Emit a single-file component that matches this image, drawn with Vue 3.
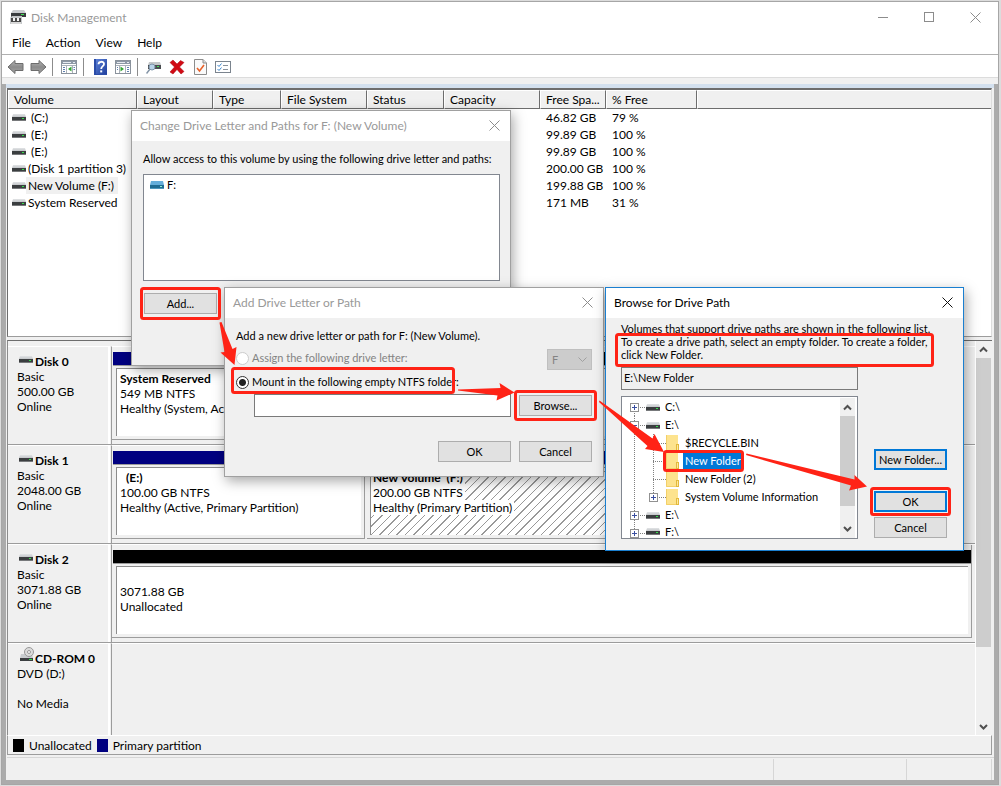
<script setup>
const menus = ['File', 'Action', 'View', 'Help']

const columns = [
  { label: 'Volume', cls: 'c-volume' },
  { label: 'Layout', cls: 'c-layout' },
  { label: 'Type', cls: 'c-type' },
  { label: 'File System', cls: 'c-fs' },
  { label: 'Status', cls: 'c-status' },
  { label: 'Capacity', cls: 'c-capacity' },
  { label: 'Free Spa...', cls: 'c-free' },
  { label: '% Free', cls: 'c-pct' },
  { label: '', cls: 'c-rest' }
]

const volumes = [
  { name: '(C:)', free: '46.82 GB', pct: '79 %', letter: true },
  { name: '(E:)', free: '99.89 GB', pct: '100 %', letter: true },
  { name: '(E:)', free: '99.89 GB', pct: '100 %', letter: true },
  { name: '(Disk 1 partition 3)', free: '200.00 GB', pct: '100 %' },
  { name: 'New Volume (F:)', free: '199.88 GB', pct: '100 %', selected: true },
  { name: 'System Reserved', free: '171 MB', pct: '31 %' }
]

const disks = [
  {
    name: 'Disk 0',
    lines: ['Basic', '500.00 GB', 'Online'],
    parts: [
      { size: 'w-reserved', kind: 'primary', title: 'System Reserved', lines: ['549 MB NTFS', 'Healthy (System, Ac'] },
      { size: 'w-fill', kind: 'free', title: '', lines: [] }
    ]
  },
  {
    name: 'Disk 1',
    lines: ['Basic', '2048.00 GB', 'Online'],
    parts: [
      { size: 'w-e', kind: 'primary', title: '(E:)', indent: true, lines: ['100.00 GB NTFS', 'Healthy (Active, Primary Partition)'] },
      { size: 'w-fill', kind: 'primary', hatched: true, title: 'New Volume  (F:)', lines: ['200.00 GB NTFS', 'Healthy (Primary Partition)'] }
    ]
  },
  {
    name: 'Disk 2',
    lines: ['Basic', '3071.88 GB', 'Online'],
    parts: [{ size: 'w-all', kind: 'free', title: '', lines: ['3071.88 GB', 'Unallocated'] }]
  }
]

const tree = [
  { label: 'C:\\', level: 1, box: '+', first: true },
  { label: 'E:\\', level: 1, box: '-' },
  { label: '$RECYCLE.BIN', level: 2 },
  { label: 'New Folder', level: 2, selected: true },
  { label: 'New Folder (2)', level: 2 },
  { label: 'System Volume Information', level: 2, box: '+', last: true },
  { label: 'E:\\', level: 1, box: '+' },
  { label: 'F:\\', level: 1, box: '+' }
]
</script>

<template>
  <div class="desktop">
    <svg class="defs" width="0" height="0" aria-hidden="true">
      <defs>
        <linearGradient id="driveTop" x1="0" y1="0" x2="0" y2="1">
          <stop offset="0" stop-color="#e2e4e6" />
          <stop offset="1" stop-color="#c2c5c8" />
        </linearGradient>
        <linearGradient id="arrowFill" x1="0" y1="0" x2="0" y2="1">
          <stop offset="0" stop-color="#b5b5b5" />
          <stop offset="0.5" stop-color="#8b8b8b" />
          <stop offset="1" stop-color="#a6a6a6" />
        </linearGradient>
        <linearGradient id="helpFill" x1="0" y1="0" x2="1" y2="1">
          <stop offset="0" stop-color="#5a7fd6" />
          <stop offset="1" stop-color="#1f3f9c" />
        </linearGradient>
        <symbol id="drive" viewBox="0 0 14 7">
          <path d="M1 0H13L14 3H0Z" fill="url(#driveTop)" />
          <rect y="3" width="14" height="4" fill="#3b3e40" />
          <rect y="6" width="14" height="1" fill="#77797b" />
          <rect x="10" y="4" width="2" height="1" fill="#35e04b" />
        </symbol>
        <symbol id="driveBlue" viewBox="0 0 14 8">
          <path d="M1 0H13L14 4H0Z" fill="#64aedb" />
          <rect y="4" width="14" height="4" fill="#1f6c93" />
          <rect y="7" width="14" height="1" fill="#4d97bd" />
          <rect x="10" y="5" width="2" height="1" fill="#8df0d0" />
        </symbol>
      </defs>
    </svg>

    <main class="window">
      <header class="titlebar">
        <svg class="app-icon" width="16" height="16" viewBox="0 0 16 16">
          <path d="M3 1H14L16 4H1Z" fill="#c9cccf" />
          <rect x="1" y="4" width="15" height="4" fill="#3a3d3f" />
          <rect x="11" y="5" width="3" height="1" fill="#3ce052" />
          <path d="M0 9L2 7H12V15H0Z" fill="#c4c7c9" />
          <rect x="1" y="9" width="10" height="4" fill="#4a4a4a" />
          <rect x="3" y="9" width="2" height="3" fill="#f4f4f4" />
          <rect x="7" y="9" width="2" height="3" fill="#f4f4f4" />
          <rect x="1" y="13" width="10" height="2" fill="#d8d8d8" />
        </svg>
        <h1 class="app-title">Disk Management</h1>
        <div class="window-controls">
          <button type="button" aria-label="Minimize">
            <svg width="11" height="11"><path d="M0 5.5H10" stroke="#8c8c8c" /></svg>
          </button>
          <button type="button" aria-label="Maximize">
            <svg width="11" height="11"><rect x="0.5" y="0.5" width="9" height="9" fill="none" stroke="#8c8c8c" /></svg>
          </button>
          <button type="button" aria-label="Close">
            <svg width="11" height="11"><path d="M0.5 0.5L10.5 10.5M10.5 0.5L0.5 10.5" stroke="#8c8c8c" /></svg>
          </button>
        </div>
      </header>

      <nav class="menubar">
        <button v-for="m in menus" :key="m" type="button">{{ m }}</button>
      </nav>

      <div class="toolbar">
        <button type="button" aria-label="Back" class="arrow-btn">
          <svg width="17" height="16" viewBox="0 0 17 16"><path d="M1 8L8 1.5V4.5H16V11.5H8V14.5Z" fill="url(#arrowFill)" stroke="#6d6d6d" /></svg>
        </button>
        <button type="button" aria-label="Forward" class="arrow-btn">
          <svg width="17" height="16" viewBox="0 0 17 16"><path d="M16 8L9 1.5V4.5H1V11.5H9V14.5Z" fill="url(#arrowFill)" stroke="#6d6d6d" /></svg>
        </button>
        <i class="sep"></i>
        <button type="button" aria-label="Console tree">
          <svg width="17" height="16" viewBox="0 0 17 16">
            <rect x="0.5" y="1.5" width="15" height="13" fill="#fff" stroke="#8a929c" />
            <rect x="1" y="2" width="14" height="3" fill="#8d98a6" />
            <path d="M2 3.5H10M12 3.5H14" stroke="#e6eaf0" />
            <path d="M1 6.5H15M5.5 6V14M11.5 6V14" stroke="#aab1ba" />
            <path d="M2 8.5H4M2 10.5H4M2 12.5H4M12.500 8.500H14M12.500 10.500H14" stroke="#5f7fae" />
            <path d="M10.500 7.500V12.500L7 10Z" fill="#35a535" />
          </svg>
        </button>
        <i class="sep"></i>
        <button type="button" aria-label="Help">
          <svg width="13" height="16" viewBox="0 0 13 16">
            <rect width="13" height="16" fill="#2b4ca8" />
            <rect x="2" width="11" height="15" fill="url(#helpFill)" />
            <path d="M4.500 5.200C4.500 2 10 2 10 5C10 7.200 7.200 7 7.200 10" fill="none" stroke="#fff" stroke-width="1.800" />
            <rect x="6.200" y="11.400" width="2" height="2" fill="#fff" />
          </svg>
        </button>
        <button type="button" aria-label="Action pane">
          <svg width="17" height="16" viewBox="0 0 17 16">
            <rect x="0.5" y="1.5" width="15" height="13" fill="#fff" stroke="#8a929c" />
            <rect x="1" y="2" width="14" height="3" fill="#8d98a6" />
            <path d="M2 3.5H10M12 3.500H14" stroke="#e6eaf0" />
            <path d="M1 6.5H15M4.500 6V14M10.500 6V14" stroke="#aab1ba" />
            <path d="M12 8.500H14M12 10.500H14M12 12.500H14M2 8.500H3M2 10.500H3" stroke="#5f7fae" />
            <path d="M5.500 7.500V12.500L9 10Z" fill="#35a535" />
          </svg>
        </button>
        <i class="sep"></i>
        <button type="button" aria-label="Rescan disks">
          <svg width="16" height="16" viewBox="0 0 16 16">
            <path d="M3 3H14L15 6H2Z" fill="#c5c8ca" />
            <rect x="2" y="6" width="13" height="4" fill="#4a4d50" />
            <rect x="11" y="7" width="2" height="1" fill="#40e056" />
            <circle cx="6" cy="8" r="3" fill="#b8d3e8" stroke="#7c93a8" />
            <path d="M4 10L0.500 14.500" stroke="#8394a6" stroke-width="1.500" />
          </svg>
        </button>
        <button type="button" aria-label="Delete">
          <svg width="16" height="16" viewBox="0 0 16 16"><path d="M4 1L8 5L11.500 1.500L15 3.500L10.500 8L15 12.500L12 15L8 10.500L4 15L1 13L5.500 8L1 3.500Z" fill="#d10a14" stroke="#a8000a" stroke-width="0.500" /></svg>
        </button>
        <button type="button" aria-label="Properties">
          <svg width="13" height="16" viewBox="0 0 13 16">
            <path d="M0.500 0.500H9L12.500 4V15.500H0.500Z" fill="#fafafa" stroke="#8c8c8c" />
            <path d="M9 0.500V4H12.500" fill="#ddd" stroke="#8c8c8c" />
            <path d="M3 9L5.500 12L10 6" fill="none" stroke="#e8622a" stroke-width="1.600" />
          </svg>
        </button>
        <button type="button" aria-label="Settings">
          <svg width="16" height="16" viewBox="0 0 16 16">
            <rect x="0.500" y="2.500" width="15" height="11" fill="#fff" stroke="#7b848e" />
            <path d="M2.500 6L4 7.500L6.500 4.500M2.500 10L4 11.500L6.500 8.500" fill="none" stroke="#3c87cf" />
            <path d="M8 6.500H13M8 10.500H13" stroke="#8a929c" />
          </svg>
        </button>
      </div>

      <div class="frame">
        <div class="client">
          <section class="volumes">
            <table>
              <thead>
                <tr>
                  <th v-for="c in columns" :key="c.cls" :class="c.cls">{{ c.label }}</th>
                </tr>
              </thead>
              <tbody>
                <tr v-for="(v, i) in volumes" :key="i">
                  <td>
                    <div class="vol">
                      <svg width="14" height="7"><use href="#drive" /></svg>
                      <span :class="{ letter: v.letter, picked: v.selected }">{{ v.name }}</span>
                    </div>
                  </td>
                  <td colspan="5"></td>
                  <td>{{ v.free }}</td>
                  <td>{{ v.pct }}</td>
                  <td></td>
                </tr>
              </tbody>
            </table>
          </section>

          <section class="graph">
            <div class="disks">
              <article v-for="d in disks" :key="d.name" class="disk">
                <div class="disk-label">
                  <h2><svg width="14" height="7"><use href="#drive" /></svg>{{ d.name }}</h2>
                  <p v-for="l in d.lines" :key="l">{{ l }}</p>
                </div>
                <div class="parts">
                  <div v-for="(p, i) in d.parts" :key="i" class="part" :class="[p.size, p.kind]">
                    <div class="bar"></div>
                    <div class="box" :class="{ hatched: p.hatched }">
                      <div><b :class="{ indent: p.indent }">{{ p.title }}</b></div>
                      <div v-for="l in p.lines" :key="l"><span>{{ l }}</span></div>
                    </div>
                  </div>
                </div>
              </article>
              <article class="disk last">
                <div class="disk-label">
                  <h2>
                    <svg class="cd" width="15" height="15" viewBox="0 0 15 15">
                      <path d="M2 7H13L14 11H1Z" fill="#c9cccf" />
                      <circle cx="10" cy="5" r="4.500" fill="#dcdcdc" stroke="#989898" />
                      <circle cx="10" cy="5" r="1.500" fill="#fff" stroke="#989898" />
                      <rect x="1" y="11" width="13" height="3" fill="#3b3e40" />
                      <rect x="10" y="12" width="3" height="1" fill="#35e04b" />
                    </svg>CD-ROM 0
                  </h2>
                  <p>DVD (D:)</p>
                  <p>&nbsp;</p>
                  <p>No Media</p>
                </div>
                <div class="parts"></div>
              </article>
            </div>
            <div class="scroll">
              <svg width="15" height="16"><path d="M4 9.500L7.500 6L11 9.500" fill="none" stroke="#505050" stroke-width="2" /></svg>
              <div class="track"><div class="thumb"></div></div>
              <svg width="15" height="16"><path d="M4 6L7.500 9.500L11 6" fill="none" stroke="#505050" stroke-width="2" /></svg>
            </div>
          </section>

          <footer class="legend">
            <i class="swatch black"></i><span>Unallocated</span>
            <i class="swatch navy"></i><span>Primary partition</span>
          </footer>
          <div class="statusbar"><i></i><i class="s2"></i><i class="s3"></i></div>
        </div>
      </div>
    </main>

    <section class="dialog change">
      <header class="dialog-title">
        <h2>Change Drive Letter and Paths for F: (New Volume)</h2>
        <button type="button" aria-label="Close">
          <svg width="11" height="11"><path d="M0.500 0.500L10.500 10.500M10.500 0.500L0.500 10.500" stroke="#8c8c8c" /></svg>
        </button>
      </header>
      <div class="dialog-body">
        <p>Allow access to this volume by using the following drive letter and paths:</p>
        <div class="paths">
          <div class="path"><svg width="14" height="8"><use href="#driveBlue" /></svg>F:</div>
        </div>
        <button type="button" class="btn">Add...</button>
      </div>
    </section>

    <section class="dialog add">
      <header class="dialog-title">
        <h2>Add Drive Letter or Path</h2>
        <button type="button" aria-label="Close">
          <svg width="11" height="11"><path d="M0.500 0.500L10.500 10.500M10.500 0.500L0.500 10.500" stroke="#8c8c8c" /></svg>
        </button>
      </header>
      <div class="dialog-body">
        <p>Add a new drive letter or path for F: (New Volume).</p>
        <div class="row assign">
          <label class="off"><input type="radio" name="mode" disabled />Assign the following drive letter:</label>
          <div class="select">
            <select aria-label="Drive letter" disabled><option>F</option></select>
            <svg width="9" height="6"><path d="M0.500 0.500L4.500 4.500L8.500 0.500" fill="none" stroke="#a0a0a0" /></svg>
          </div>
        </div>
        <div class="row mount">
          <label><input type="radio" name="mode" checked />Mount in the following empty NTFS folder:</label>
        </div>
        <div class="row target">
          <input type="text" aria-label="NTFS folder" />
          <button type="button" class="btn">Browse...</button>
        </div>
        <div class="row actions">
          <button type="button" class="btn">OK</button>
          <button type="button" class="btn">Cancel</button>
        </div>
      </div>
    </section>

    <section class="dialog browse">
      <header class="dialog-title">
        <h2>Browse for Drive Path</h2>
        <button type="button" aria-label="Close">
          <svg width="11" height="11"><path d="M0.500 0.500L10.500 10.500M10.500 0.500L0.500 10.500" stroke="#111" /></svg>
        </button>
      </header>
      <div class="dialog-body">
        <p>Volumes that support drive paths are shown in the following list.<br />To create a drive path, select an empty folder. To create a folder,<br />click New Folder.</p>
        <input type="text" aria-label="Drive path" value="E:\New Folder" readonly />
        <div class="columns">
          <div class="tree">
            <ul>
              <li v-for="(n, i) in tree" :key="i">
                <svg :width="n.level === 1 ? 21 : 41" height="18" class="guide">
                  <g stroke="#808080" stroke-dasharray="1 1">
                    <path :d="n.first ? 'M9.5 9V18' : 'M9.5 0V18'" />
                    <path v-if="n.level === 1" d="M9 9.500H21" />
                    <template v-else>
                      <path :d="n.last ? 'M28.5 0V9' : 'M28.5 0V18'" />
                      <path d="M28 9.500H41" />
                    </template>
                  </g>
                  <g v-if="n.box">
                    <rect :x="n.level === 1 ? 5.5 : 24.5" y="5.500" width="8" height="8" fill="#fff" stroke="#919191" />
                    <path :d="n.level === 1 ? 'M7 9.5H12' : 'M26 9.5H31'" stroke="#3a4fa0" />
                    <path v-if="n.box === '+'" :d="n.level === 1 ? 'M9.5 7V12' : 'M28.5 7V12'" stroke="#3a4fa0" />
                  </g>
                </svg>
                <svg v-if="n.level === 1" width="14" height="7" class="node-drive"><use href="#drive" /></svg>
                <svg v-else width="13" height="16" viewBox="0 0 13 16" class="node-folder">
                  <rect width="12" height="16" fill="#fde38e" />
                  <path d="M0.500 0V15.500H12" fill="none" stroke="#f3d069" />
                  <rect x="10.500" y="9.500" width="2" height="6" fill="#fde89f" stroke="#e3b93b" />
                </svg>
                <span :class="{ sel: n.selected }">{{ n.label }}</span>
              </li>
            </ul>
            <div class="tree-scroll">
              <svg width="15" height="18"><path d="M4 11.500L7.500 8L11 11.500" fill="none" stroke="#505050" stroke-width="2" /></svg>
              <div class="track"><div class="thumb"></div></div>
              <svg width="15" height="18"><path d="M4 7L7.500 10.500L11 7" fill="none" stroke="#505050" stroke-width="2" /></svg>
            </div>
          </div>
          <div class="side">
            <button type="button" class="btn blue">New Folder...</button>
            <button type="button" class="btn blue ok">OK</button>
            <button type="button" class="btn">Cancel</button>
          </div>
        </div>
      </div>
    </section>

    <svg class="marks" width="1001" height="786" viewBox="0 0 1001 786" aria-hidden="true">
      <g fill="none" stroke="#ff2316" stroke-width="3">
        <rect x="141.500" y="288.500" width="78" height="30" rx="2" />
        <rect x="232.500" y="368.500" width="221" height="24" rx="2" />
        <rect x="515.500" y="391.500" width="80" height="28" rx="2" />
        <rect x="616.500" y="334.500" width="316" height="31" rx="2" />
        <rect x="664.500" y="451.500" width="78" height="19" rx="2" />
        <rect x="871.500" y="488.500" width="78" height="26" rx="2" />
      </g>
      <g fill="#ff2316">
        <path d="M219.500 322.500L221.500 322L232.500 349L236.500 347L234.500 365L220.500 352.500L224.500 352Z" />
        <path d="M458 389.500L500.500 388L499.500 383L514.500 392.500L496.500 400.500L497.500 395.500L458 390.500Z" />
        <path d="M599.500 400.500L652.500 438.500L654.500 434L664 452L645 449L647.500 446L599 402Z" />
        <path d="M746.500 453.500L854.500 479.500L854.500 475L867 486.500L849 490.500L851 485.500L746 455Z" />
      </g>
    </svg>
  </div>
</template>

<style>
body {
  margin: 0;
  background: #dcdcdc;
}
</style>

<style scoped>
.desktop {
  position: relative;
  min-height: 100vh;
  box-sizing: border-box;
  padding: 1px 2px 1px 1px;
  display: flex;
  font: 12px/15px Lato, "Open Sans", "Noto Sans", sans-serif;
  color: #000;
  overflow: hidden;
}
.defs { position: absolute; }
h1, h2, p, ul { margin: 0; padding: 0; font-size: inherit; font-weight: normal; }
button { font: inherit; color: inherit; margin: 0; padding: 0; border: 0; background: none; }
svg { display: block; flex: none; }

.window {
  flex: 1;
  min-width: 0;
  display: flex;
  flex-direction: column;
  border: 1px solid #a6a6a6;
  background: #fff;
}
.titlebar { display: flex; align-items: center; height: 30px; padding-left: 8px; }
.app-title { color: #999; padding-left: 5px; flex: 1; }
.window-controls { display: flex; }
.window-controls button { width: 46px; height: 28px; display: flex; align-items: center; justify-content: center; }
.menubar { display: flex; gap: 15px; height: 22px; padding-left: 10px; border-bottom: 1px solid #b0b0b0; }
.menubar button { height: 21px; }
.toolbar { display: flex; align-items: center; gap: 7px; height: 23px; padding: 2px 0 0 5px; border-bottom: 1px solid #dcdcdc; box-sizing: border-box; }
.toolbar button { display: flex; justify-content: center; min-width: 16px; }
.toolbar .arrow-btn + .arrow-btn { margin-left: -1px; }
.toolbar .sep { width: 1px; height: 18px; background: #8c8c8c; margin: 0 1px 0 -2px; }

.frame { flex: 1; display: flex; border-top: 6px solid #f0f0f0; padding: 0 4px 4px; background: #ababab; }
.client { flex: 1; min-width: 0; display: flex; flex-direction: column; border-top: 4px solid #d3e0ee; background: #f0f0f0; padding-left: 1px; }

.volumes { height: 246px; border: 1px solid #6d6d6d; border-top: 2px solid #6d6d6d; border-right-color: #ddd; border-bottom-color: #9c9c9c; margin: 0 2px 3px 0; background: #fff; }
table { width: 100%; table-layout: fixed; border-collapse: separate; border-spacing: 0; }
th { height: 17px; padding: 0 0 0 5px; font-weight: normal; text-align: left; background: #f0f0f0; border: 1px solid; border-color: #fff #6d6d6d #6d6d6d #fff; white-space: nowrap; line-height: 16px; overflow: hidden; }
td { height: 17px; padding: 0 0 0 6px; line-height: 17px; white-space: nowrap; }
td:first-child { padding-left: 4px; }
.c-volume { width: 122px; }
.c-layout { width: 69px; }
.c-type { width: 61px; }
.c-fs { width: 79px; }
.c-status { width: 70px; }
.c-capacity { width: 89px; }
.c-free { width: 59px; }
.c-pct { width: 84px; }
.c-rest { border-right: 0; }
.vol { display: flex; align-items: center; }
.vol span { padding: 0 4px 0 2px; }
.vol .letter { padding-left: 5px; }
.vol .picked { background: #f0f0f0; }

.graph { flex: 1; display: flex; border-left: 1px solid #8c8c8c; border-top: 1px solid #6d6d6d; margin-right: 2px; }
.disks { flex: 1; min-width: 0; display: flex; flex-direction: column; padding-top: 5px; border-right: 1px solid #fff; }
.disk { display: flex; height: 98px; border-bottom: 1px solid #9c9c9c; }
.disk.last { flex: 1; height: auto; border-bottom: 0; }
.disk-label { flex: none; width: 91px; padding: 7px 0 0 9px; border-top: 1px solid #fff; border-right: 2px solid #fff; }
.disk-label h2 { display: flex; font-weight: bold; gap: 2px; padding-left: 2px; }
.disk-label h2 svg { margin-top: 2px; }
.disk-label h2 .cd { margin: -4px 0 0; }
.last .disk-label h2 { gap: 1px; }
.parts { flex: 1; min-width: 0; display: flex; border-left: 1px solid #9c9c9c; border-top: 1px solid #fff; margin-left: 1px; }
.part { display: flex; flex-direction: column; box-sizing: border-box; padding-top: 5px; height: 93px; border-right: 1px solid #9c9c9c; border-bottom: 1px solid #9c9c9c; padding-left: 1px; }
.bar { height: 13px; border-bottom: 1px solid #9c9c9c; background: #000080; }
.free .bar { background: #000; }
.box { flex: 1; margin: 2px 3px 3px; padding: 2px 3px; background: #fff; border-top: 1px solid #8c8c8c; border-left: 1px solid #8c8c8c; white-space: pre; overflow: hidden; }
.box div { min-height: 15px; }
.indent { padding-left: 6px; }
.hatched { background: repeating-linear-gradient(135deg, #fff 0 5px, #999 5px 6px); padding-left: 0; margin-left: 2px; }
.hatched b, .hatched span { background: #fff; padding: 0 2px; }
.w-reserved { width: 180px; }
.w-e { width: 253px; }
.w-fill { flex: 0 1 500px; max-width: 500px; margin-left: 2px; }
.w-all { flex: 1; margin-right: 3px; }

.scroll { width: 15px; margin-right: 1px; padding-top: 1px; display: flex; flex-direction: column; }
.track { flex: 1; display: flex; flex-direction: column; }
.thumb { height: 80%; background: #cdcdcd; }

.legend { display: flex; align-items: center; height: 18px; border: 1px solid #9c9c9c; border-top-color: #fff; margin-right: 2px; padding-left: 5px; }
.swatch { width: 11px; height: 13px; }
.swatch + span { margin: 0 5px; }
.black { background: #000; }
.navy { background: #000080; }
.statusbar { display: flex; height: 22px; margin-top: 2px; border-top: 1px solid #d6d6d6; padding-right: 2px; }
.statusbar i { flex: 1; margin-top: 1px; border-right: 1px solid #d6d6d6; }
.statusbar .s2 { flex: 0 0 132px; }
.statusbar .s3 { flex: 0 0 84px; }

.dialog { position: absolute; box-sizing: border-box; border: 1px solid #a0a0a0; background: #f0f0f0; box-shadow: 2px 4px 12px rgba(0, 0, 0, 0.35); }
.change { left: 131px; top: 110px; width: 380px; height: 256px; }
.add { left: 224px; top: 287px; width: 380px; height: 190px; }
.browse { left: 605px; top: 287px; width: 359px; height: 264px; border-color: #1a7fd0; }
.dialog-title { display: flex; align-items: center; height: 30px; box-sizing: border-box; background: #fff; padding: 0 10px 2px 8px; color: #999; }
.dialog-title h2 { flex: 1; white-space: nowrap; }
.browse .dialog-title { color: #000; }
.dialog-body { font-size: 11px; line-height: 14px; padding: 11px 11px 0; }
.change p, .add p { white-space: nowrap; }
.paths { height: 105px; margin: 8px 0 12px; border: 1px solid #828790; background: #fff; }
.change .dialog-body { padding-right: 10px; }
.path { display: flex; align-items: center; gap: 3px; padding: 3px 6px; }
.change .btn { margin-left: 1px; }
.btn { display: block; box-sizing: border-box; width: 73px; height: 21px; border: 1px solid #adadad; background: #e1e1e1; text-align: center; white-space: nowrap; }
.btn.blue { border: 2px solid #0078d7; }
.row { display: flex; align-items: center; }
.assign { justify-content: space-between; align-items: flex-start; height: 21px; margin-top: 6px; }
.mount { height: 20px; margin-top: 2px; }
label { display: flex; align-items: center; gap: 3px; min-height: 18px; white-space: nowrap; }
label.off { color: #838383; }
input[type="radio"] { appearance: none; box-sizing: border-box; width: 13px; height: 13px; margin: 0; border: 1px solid #333; border-radius: 50%; background: #fff; }
input[type="radio"]:checked { background: radial-gradient(circle, #222 0 3px, #fff 4px); }
input[type="radio"]:disabled { border-color: #ccc; }
.select { position: relative; }
select { appearance: none; box-sizing: border-box; width: 45px; height: 21px; border: 1px solid #bfbfbf; border-radius: 0; background: #ccc; color: #838383; font: inherit; padding: 0 4px; opacity: 1; display: block; }
.select svg { position: absolute; right: 5px; top: 8px; }
.target { margin: 2px 0 0 18px; gap: 8px; }
input[type="text"] { box-sizing: border-box; border: 1px solid #7a7a7a; background: #fff; font: inherit; margin: 0; }
.target input { flex: 1; min-width: 0; height: 23px; }
.actions { justify-content: flex-end; gap: 8px; margin-top: 24px; }

.browse .dialog-body { padding: 4px 16px 0 15px; }
.browse p { line-height: 13px; white-space: nowrap; }
.browse input { display: block; width: 237px; height: 23px; margin-top: 6px; padding: 0 2px 3px; background: #f0f0f0; }
.columns { display: flex; gap: 16px; margin-top: 6px; }
.tree { box-sizing: border-box; width: 237px; height: 143px; border: 1px solid #828790; background: #fff; display: flex; padding: 1px 2px 0 3px; }
.tree ul { flex: 1; min-width: 0; list-style: none; overflow: hidden; }
.tree li { display: flex; align-items: center; height: 18px; }
.node-drive { margin-right: 3px; }
.node-folder { margin-right: 4px; }
.tree li span { padding: 1px 2px; white-space: nowrap; }
.tree li:last-child { height: 14px; }
.tree li:last-child .guide { align-self: flex-start; }
.tree li:last-child span { padding: 0 2px; line-height: 13px; }
.tree .sel { background: #0078d7; color: #fff; }
.tree-scroll { width: 15px; background: #f0f0f0; display: flex; flex-direction: column; }
.tree-scroll .thumb { height: 87%; }
.side { padding-top: 53px; }
.side .ok { margin: 21px 0 5px; }

.marks { position: absolute; left: 0; top: 0; pointer-events: none; }
</style>
